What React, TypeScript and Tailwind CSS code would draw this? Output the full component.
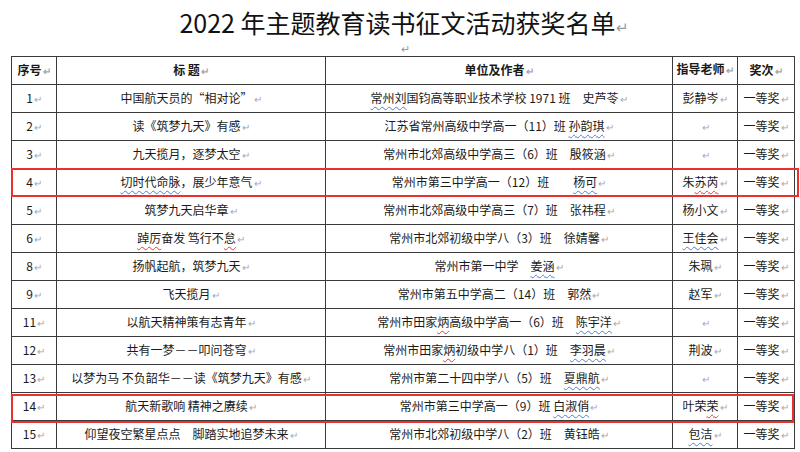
import React from 'react';

type Seg = string | { t: string; c: 'b' | 'r' };
type Row = { no: string; title: Seg[]; unit: Seg[]; teacher: Seg[] };

const rows: Row[] = [
  { no: '1', title: ['中国航天员的“相对论”'], unit: [{ t: '常州刘', c: 'b' }, '国钧高等职业技术学校 1971 班　史芦苓'], teacher: ['彭静岑'] },
  { no: '2', title: ['读《筑梦九天》有感'], unit: ['江苏省常州高级中学高一（11）班 ', { t: '孙韵琪', c: 'b' }], teacher: [] },
  { no: '3', title: ['九天揽月，逐梦太空'], unit: ['常州市北郊高级中学高三（6）班　殷筱涵'], teacher: [] },
  { no: '4', title: [{ t: '切时代命脉', c: 'b' }, '，展少年意气'], unit: ['常州市第三中学高一（12）班　　', { t: '杨可', c: 'b' }], teacher: ['朱', { t: '苏芮', c: 'r' }] },
  { no: '5', title: ['筑梦九天启华章'], unit: ['常州市北郊高级中学高三（7）班　张祎程'], teacher: ['杨小文'] },
  { no: '6', title: [{ t: '踔厉', c: 'r' }, '奋发 笃行不', { t: '怠', c: 'r' }], unit: ['常州市北郊初级中学八（3）班　徐婧馨'], teacher: [{ t: '王佳会', c: 'b' }] },
  { no: '8', title: ['扬帆起航，筑梦九天'], unit: ['常州市第一中学　', { t: '姜涵', c: 'b' }], teacher: ['朱珮'] },
  { no: '9', title: ['飞天揽月'], unit: ['常州市第五中学高二（14）班　郭然'], teacher: ['赵军'] },
  { no: '11', title: ['以航天精神策有志青年'], unit: ['常州市田家', { t: '炳', c: 'r' }, '高级中学高一（6）班　', { t: '陈宇洋', c: 'b' }], teacher: [] },
  { no: '12', title: ['共有一梦－－叩问苍穹'], unit: ['常州市田家', { t: '炳', c: 'r' }, '初级中学八（1）班　', { t: '李羽晨', c: 'b' }], teacher: ['荆波'] },
  { no: '13', title: ['以梦为马 不负韶华－－读《筑梦九天》有感'], unit: ['常州市第二十四中学八（5）班　', { t: '夏鼎航', c: 'b' }], teacher: [] },
  { no: '14', title: ['航天新歌响 精神之赓续'], unit: ['常州市第三中学高一（9）班 ', { t: '白淑俏', c: 'b' }], teacher: ['叶荣', { t: '荣', c: 'r' }] },
  { no: '15', title: ['仰望夜空繁星点点　脚踏实地追梦未来'], unit: ['常州市北郊初级中学八（2）班　黄钰皓'], teacher: [{ t: '包洁', c: 'b' }] },
];

const Mark = () => <span className="text-[10px] text-[#a8a8a8] ml-[1px]">↵</span>;

const Segs = ({ s }: { s: Seg[] }) => (
  <>
    {s.map((x, i) =>
      typeof x === 'string' ? (
        <span key={i} className="whitespace-pre">{x}</span>
      ) : (
        <span
          key={i}
          className={
            x.c === 'b'
              ? 'underline decoration-wavy decoration-[#4a7fd8] decoration-1 underline-offset-[3px]'
              : 'underline decoration-wavy decoration-[#e53935] decoration-1 underline-offset-[3px]'
          }
        >
          {x.t}
        </span>
      )
    )}
    <Mark />
  </>
);

const td = 'border border-[#3a3a3a] h-[28px] p-0 text-center align-middle';

export default function App() {
  return (
    <div className="relative w-[800px] h-[452px] overflow-hidden bg-white text-[#1a1a1a] font-['Noto_Sans_CJK_SC','Noto_Sans',sans-serif]">
      <div className="pt-[7px] h-[40px] text-center text-[25px] leading-[30px] text-[#111] pl-[8px]">
        2022 年主题教育读书征文活动获奖名单<span className="text-[15px] text-[#9a9a9a]">↵</span>
      </div>
      <div className="h-[16px] leading-[16px] text-center text-[11px] text-[#9a9a9a] pl-[10px]">↵</div>

      <table className="ml-[11px] border-collapse table-fixed text-[12px] leading-[16px]">
        <colgroup>
          <col className="w-[45px]" />
          <col className="w-[269px]" />
          <col className="w-[347px]" />
          <col className="w-[65px]" />
          <col className="w-[57px]" />
        </colgroup>
        <thead>
          <tr>
            <th className={td + ' font-bold'}>序号<Mark /></th>
            <th className={td + ' font-bold'}>标 题<Mark /></th>
            <th className={td + ' font-bold'}>单位及作者<Mark /></th>
            <th className={td + ' font-bold align-bottom pb-[2px]'}>指导老师<Mark /></th>
            <th className={td + ' font-bold'}>奖次<Mark /></th>
          </tr>
        </thead>
        <tbody>
          {rows.map((r) => (
            <tr key={r.no}>
              <td className={td}>{r.no}<Mark /></td>
              <td className={td}><Segs s={r.title} /></td>
              <td className={td}><Segs s={r.unit} /></td>
              <td className={td}><Segs s={r.teacher} /></td>
              <td className={td}>一等奖<Mark /></td>
            </tr>
          ))}
        </tbody>
      </table>

      {/* highlight boxes drawn over rows 4 and 14 */}
      <div className="absolute left-[11px] top-[168px] w-[788px] h-[29px] border-2 border-[#ec2f2f]" />
      <div className="absolute left-[11px] top-[394px] w-[783px] h-[29px] border-2 border-[#ec2f2f]" />
    </div>
  );
}
